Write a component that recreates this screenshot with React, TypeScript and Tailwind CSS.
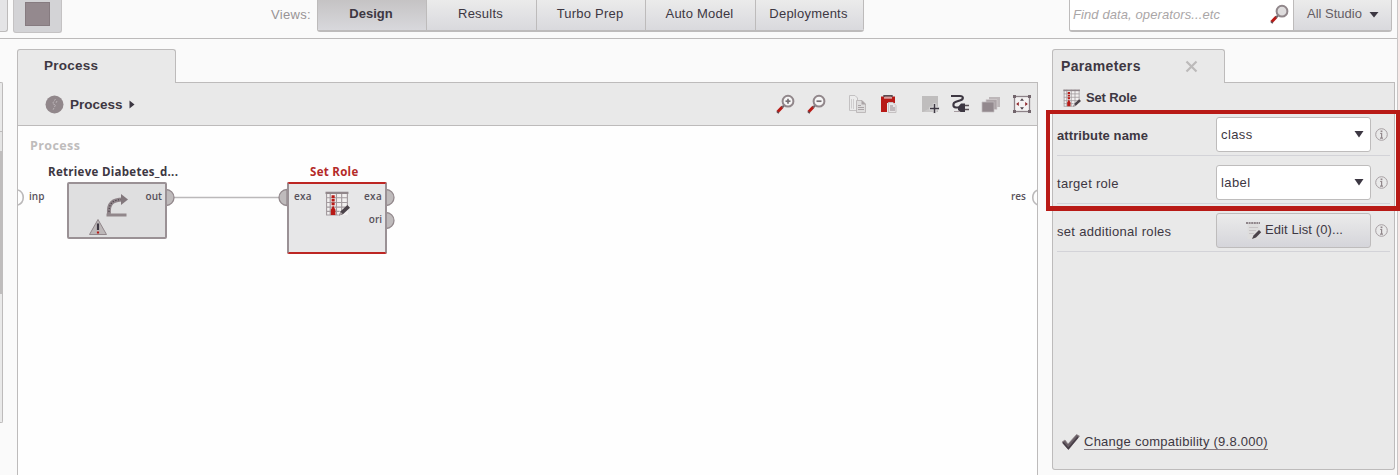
import React from "react";

const views = [
  { name: "Design", cls: "w-[109px]" },
  { name: "Results", cls: "w-[110px]" },
  { name: "Turbo Prep", cls: "w-[109px]" },
  { name: "Auto Model", cls: "w-[110px]" },
  { name: "Deployments", cls: "w-[108px]" },
];

function Magnifier({ sign, className }: { sign?: "+" | "-"; className?: string }) {
  return (
    <svg width="20" height="20" viewBox="0 0 20 20" className={className} fill="none">
      <path d="M1.5 18 L6.5 12.8" stroke="#b81a16" strokeWidth="3" />
      <path d="M.8 17.5 L2.8 19.2" stroke="#5d4a50" strokeWidth="1.5" />
      <path d="M6 13.5 L8.5 11" stroke="#6f6468" strokeWidth="2" />
      <circle cx="12" cy="7.2" r="5.4" fill={sign ? "#f5f5f5" : "#dedcdd"} stroke="#91878b" strokeWidth="2" />
      {sign && <path d="M9.5 7.2 H14.5" stroke="#777074" strokeWidth="1.7" />}
      {sign === "+" && <path d="M12 4.7 V9.7" stroke="#777074" strokeWidth="1.7" />}
    </svg>
  );
}

function CopyIcon() {
  return (
    <svg width="20" height="20" viewBox="0 0 20 20" fill="none">
      <path d="M2.5 1.5 H8 L10.5 4 V16.5 H2.5 Z" fill="#ececec" stroke="#c3c1c2" />
      <path d="M4.5 5 V14.5 M6.5 5 V15" stroke="#cfcdce" />
      <path d="M9.5 6.5 H15 L18.5 10 V18.5 H9.5 Z" fill="#dedddd" stroke="#bebabb" />
      <path d="M11 11.5 H14 M11 13.5 H17 M11 15.5 H17" stroke="#aaa4a6" />
      <path d="M14.5 6 L19 10.5 H14.5 Z" fill="#aaa4a6" />
    </svg>
  );
}

function PasteIcon() {
  return (
    <svg width="20" height="20" viewBox="0 0 20 20" fill="none">
      <path d="M2 2.5 H16 V9 H8 V18 H2 Z" fill="#b81a16" />
      <path d="M5 3.3 H13 V4.5 H5 Z" fill="#e5dcdc" />
      <path d="M5 3 V1.8 H13 V3" stroke="#574b51" strokeWidth="1.4" />
      <path d="M9.5 8.5 H14 L17 11.5 V18.5 H9.5 Z" fill="#e7e5e6" stroke="#c5c1c2" />
      <path d="M11 12 H14 M11 14 H16 M11 16 H16" stroke="#958b90" />
    </svg>
  );
}

function AddNoteIcon() {
  return (
    <svg width="20" height="20" viewBox="0 0 20 20" fill="none">
      <path d="M2 2 H18 V18 H2 Z" fill="#bfbdbd" />
      <path d="M3 18 L17 10 V18 Z" fill="#c9c7c7" />
      <path d="M14.5 9.5 V19.5 M9.5 14.5 H19.5" stroke="#dedede" strokeWidth="3.4" />
      <path d="M14.5 10 V19 M10 14.5 H19" stroke="#3d3742" strokeWidth="1.5" />
    </svg>
  );
}

function PlugIcon() {
  return (
    <svg width="20" height="20" viewBox="0 0 20 20" fill="none">
      <path d="M1 2 H10 C14 2 13.5 5.5 10.5 6.3 L6 7.8 C2.5 9 2.5 13 6 13.5 H9" stroke="#3d3742" strokeWidth="2.1" />
      <path d="M8 13 L11 9.5 H15 V18 H10.5 L8 16 Z" fill="#3d3742" />
      <path d="M15 11.5 H19 M15 15.5 H19" stroke="#5c5359" strokeWidth="1.5" />
      <path d="M4 17.5 H10" stroke="#a69ba0" />
    </svg>
  );
}

function StackIcon() {
  return (
    <svg width="20" height="20" viewBox="0 0 20 20">
      <path d="M8 3 H19 V13 H8 Z" fill="#bdb7b9" />
      <path d="M5 5.5 H16 V15.5 H5 Z" fill="#aca4a7" stroke="#d4cfd1" strokeWidth=".7" />
      <path d="M1 8 H13 V18 H1 Z" fill="#93898e" stroke="#c4bec1" strokeWidth=".7" />
    </svg>
  );
}

function FitIcon() {
  return (
    <svg width="20" height="20" viewBox="0 0 20 20" fill="none">
      <rect x="2.5" y="2.5" width="15" height="15" fill="#f4f2f2" stroke="#8d8288" strokeWidth="1.3" />
      <path d="M8 6.8 L10 4.2 L12 6.8 Z M8 13.2 L10 15.8 L12 13.2 Z" fill="#4e434b" />
      <path d="M6.8 8 L4.2 10 L6.8 12 Z M13.2 8 L15.8 10 L13.2 12 Z" fill="#8f2226" />
      <path d="M1 1 H4 V4 H1 Z M16 1 H19 V4 H16 Z M1 16 H4 V19 H1 Z M16 16 H19 V19 H16 Z" fill="#72656c" />
    </svg>
  );
}

function RoleIcon({ className }: { className?: string }) {
  return (
    <svg viewBox="0 0 24 24" className={className} fill="none">
      <rect x="1" y="1" width="21" height="22" fill="#f2f0f0" />
      <path d="M1.5 1 V23 M5 1 V23 M11 1 V23 M16 1 V23 M21.5 1 V15 M1 6.5 H22 M1 11 H22 M1 15.5 H20 M1 19.5 H14 M1 23 H13" stroke="#a39b9f" strokeWidth="1.1" />
      <path d="M0.5 1.8 H22.5" stroke="#91878b" strokeWidth="2.2" />
      <path d="M7.8 4 V14" stroke="#b81a16" strokeWidth="3" strokeDasharray="2.6 .9" />
      <path d="M7.8 14 L10 18 V23 H5.6 V18 Z" fill="#b81a16" />
      <path d="M13.5 23.5 L15 19.5 L21.5 13.5 L24 16 L17.5 22 Z" fill="#4b434a" />
      <path d="M13 24 L15 19.8 L17 22 Z" fill="#aaa0a4" />
    </svg>
  );
}

function ListIcon() {
  return (
    <svg width="17" height="19" viewBox="0 0 17 19" fill="none" className="shrink-0">
      <rect x="1.5" y="2" width="12" height="16" fill="#dedddd" />
      <path d="M0 2 H14" stroke="#8f858a" strokeWidth="2" strokeDasharray="2 .6" />
      <path d="M3 6.5 H12 M3 9.5 H10 M3 12.5 H8" stroke="#c8c4c6" />
      <path d="M6 18 L7.5 14.5 L13 9 L15.2 11.2 L10 16.5 Z" fill="#4b434a" />
    </svg>
  );
}

function InfoIcon() {
  return (
    <svg width="13" height="13" viewBox="0 0 13 13" fill="none" className="shrink-0">
      <circle cx="6.5" cy="6.5" r="5.8" stroke="#a69fa2" />
      <path d="M6.5 2.5 V4.2" stroke="#91878b" strokeWidth="1.8" />
      <path d="M5.2 5.5 H6.6 V10 M5 10.2 H8" stroke="#91878b" strokeWidth="1.2" />
    </svg>
  );
}

function Select({ value }: { value: string }) {
  return (
    <div className="flex h-[35px] w-[155px] shrink-0 items-center justify-between rounded-[3px] border border-[#bebcbc] bg-white pr-[6px] pl-[4px] text-[13px] tracking-[0.4px]">
      <span className="pt-[2px]">{value}</span>
      <svg width="10" height="8" viewBox="0 0 10 8" className="mb-px">
        <path d="M.5 1 H9.5 L5 7.5 Z" fill="#3c3742" />
      </svg>
    </div>
  );
}

function Row({ label, bold, children }: { label: string; bold?: boolean; children: React.ReactNode }) {
  return (
    <div className="flex h-[48px] items-center border-b border-[#d3d3d8] pt-[5px]">
      <div className={bold ? "w-[159px] pt-[3px] text-[13px] font-bold tracking-[0.1px]" : "w-[159px] pt-[3px] text-[13px] tracking-[0.3px]"}>{label}</div>
      {children}
      <div className="ml-[4px]">
        <InfoIcon />
      </div>
    </div>
  );
}

function Canvas() {
  return (
    <div className="relative flex-1 overflow-hidden bg-[#fefefe] font-['Open_Sans','Noto_Sans',sans-serif] text-[10px] leading-[14px] font-semibold text-[#57515a]">
      <div className="absolute top-[11px] left-[12px] text-[12.5px] leading-[17px] font-bold tracking-[0.4px] text-[#bebcbc]">Process</div>
      <svg className="absolute inset-0" width="1020" height="200" fill="none">
        <path d="M0 64 A8 8 0 0 1 0 79" stroke="#bbb9ba" strokeWidth="1.6" />
        <path d="M1020 64 A8 8 0 0 0 1020 79" stroke="#bbb9ba" strokeWidth="1.6" />
        <path d="M156 71.5 H262" stroke="#bbb9ba" strokeWidth="1.6" />
        <path d="M148 63.5 A8 8 0 0 1 148 79.5 Z" fill="#bfbbbc" stroke="#93898d" strokeWidth="1.3" />
        <path d="M269 63.5 A8 8 0 0 0 269 79.5 Z" fill="#bfbbbc" stroke="#93898d" strokeWidth="1.3" />
        <path d="M368 63.5 A8 8 0 0 1 368 79.5 Z" fill="#bfbbbc" stroke="#93898d" strokeWidth="1.3" />
        <path d="M368 86.5 A8 8 0 0 1 368 102.5 Z" fill="#bfbbbc" stroke="#93898d" strokeWidth="1.3" />
      </svg>
      <div className="absolute top-[63px] left-[11px]">inp</div>
      <div className="absolute top-[63px] left-[993px]">res</div>

      <div className="absolute top-[38px] left-[30px] text-[11.5px] leading-[15px] font-bold tracking-[0.3px] whitespace-nowrap text-[#3d3742]">Retrieve Diabetes_d...</div>
      <div className="absolute top-[56px] left-[49px] h-[57px] w-[100px] rounded-[2px] border-2 border-[#9a9195] bg-[#dfdfe0]">
        <div className="absolute top-[5px] right-[3px]">out</div>
        <svg width="98" height="54" viewBox="0 0 98 54" fill="none" className="absolute -top-px -left-px">
          <path d="M41 31 C40 20 45 16.5 55 16.5" stroke="#8e8388" strokeWidth="4" />
          <path d="M41 29 C41 20 45 16.5 55 16.5" stroke="#4e454c" strokeWidth="1.2" strokeDasharray="1.2 1.6" />
          <path d="M53 11 L60 16.5 L53 22 Z" fill="#82777c" />
          <path d="M38.5 32 H58.5" stroke="#91878b" strokeWidth="3" />
          <path d="M30 36.5 L38.5 51.5 H21.5 Z" fill="#bcb7b8" stroke="#91878b" strokeLinejoin="round" />
          <path d="M30 40.5 V47" stroke="#3d3742" strokeWidth="2.2" />
          <path d="M30 48.5 V50.5" stroke="#b81a16" strokeWidth="2.2" />
        </svg>
      </div>

      <div className="absolute top-[38px] left-[292px] text-[11.5px] leading-[15px] font-bold tracking-[0.3px] whitespace-nowrap text-[#b42a28]">Set Role</div>
      <div className="absolute top-[56px] left-[269px] h-[72px] w-[100px] rounded-[2px] border-2 border-x-[#9a9195] border-y-[#bd2623] bg-[#e7e7e8]">
        <div className="absolute top-[5px] left-[5px] tracking-[0.3px]">exa</div>
        <div className="absolute top-[5px] right-[3px] tracking-[0.3px]">exa</div>
        <div className="absolute top-[28px] right-[3px]">ori</div>
        <RoleIcon className="absolute top-[7px] left-[36px] h-[25px] w-[25px]" />
      </div>
    </div>
  );
}

export default function App() {
  return (
    <div className="flex h-[475px] w-[1400px] overflow-hidden bg-[#fafafa] font-['Liberation_Sans',Arial,sans-serif] text-[#3d3742]">
      <div className="flex min-w-0 flex-1 flex-col">
        <header className="flex h-[39px] shrink-0 items-start border-b border-[#bcbaba]">
          <div className="h-[32px] w-[8px] rounded-br-[3px] border-r border-b border-[#bdbbbb] bg-[#e4e4e6]" />
          <div className="ml-[5px] flex h-[33px] w-[49px] justify-center rounded-b-[3px] border-x border-b border-[#c4c2c3] bg-[#d3d3d6] pt-[2px]">
            <div className="h-[24px] w-[25px] border border-[#867b80] bg-[#94898e]" />
          </div>
          <div className="ml-[209px] w-[46px] pt-[7px] text-[13px] leading-[15px] tracking-[0.3px] text-[#989395]">Views:</div>
          <nav className="flex h-[32px] overflow-hidden rounded-b-[3px] border-b-2 border-l border-[#bdbbbb]">
            {views.map((v, i) => (
              <div
                key={v.name}
                className={
                  "flex items-center justify-center border-r border-[#bdbbbb] pr-[2px] pb-[2px] text-[13px] " +
                  (i === 0 ? "bg-linear-to-b from-[#c5c3c4] to-[#d8d8dc] font-bold " : "bg-linear-to-b from-[#ebebeb] to-[#d9d9dd] tracking-[0.22px] ") +
                  v.cls
                }
              >
                {v.name}
              </div>
            ))}
          </nav>
          <div className="ml-auto flex h-[32px] w-[323px] overflow-hidden rounded-b-[3px] border-x border-b-2 border-[#bdbbbb]">
            <div className="flex flex-1 items-center justify-between border-r border-[#bdbbbb] bg-white pl-[3px]">
              <span className="text-[13px] tracking-[0.1px] text-[#aaa6a7] italic">Find data, operators...etc</span>
              <Magnifier className="mr-[3px] mb-[2px]" />
            </div>
            <div className="flex w-[97px] items-center justify-between bg-linear-to-b from-[#ebebeb] to-[#d9d9dd] pr-[12px] pb-[2px] pl-[13px] text-[13px] text-[#655d64]">
              <span>All Studio</span>
              <svg width="10" height="7" viewBox="0 0 10 7">
                <path d="M.5 1 H9.5 L5 6.5 Z" fill="#3c3742" />
              </svg>
            </div>
          </div>
          <div className="w-[5px]" />
        </header>

        <div className="flex min-h-0 flex-1">
          <aside className="flex w-[17px] flex-col pt-[43px]">
            <div className="h-[49px] w-[3px] rounded-tr-[2px] border-t border-r border-[#bdbbbb] bg-[#e9e9e9]" />
            <div className="h-[20px] w-[3px] border-t border-r border-[#bdbbbb] bg-[#e4e4e4]" />
            <div className="h-[143px] w-[3px] bg-[#bfbdbd]" />
            <div className="h-[129px] w-[3px] rounded-br-[2px] border-r border-b border-[#bdbbbb] bg-[#e9e9e9]" />
          </aside>

          <section className="flex w-[1021px] flex-col pt-[10px]">
            <div className="flex h-[34px] shrink-0">
              <div className="flex w-[159px] items-center rounded-t-[3px] border-t border-r border-l border-[#bdbbbb] bg-[#e9e9e9] pl-[26px] text-[13.5px] font-bold tracking-[0.25px]">Process</div>
              <div className="flex-1 border-b border-[#bdbbbb]" />
            </div>
            <div className="flex h-[43px] shrink-0 items-center border-r border-b border-l border-[#bdbbbb] bg-[#e9e9e9] pr-[5px] pl-[27px]">
              <svg width="19" height="19" viewBox="0 0 19 19" fill="none">
                <circle cx="9.5" cy="9.5" r="9" fill="#91878b" />
                <path d="M10.5 4 L7.5 8.5 L10.5 10 L8 15 M12 6 L11 8" stroke="#b9b2b5" strokeDasharray="2 1" />
              </svg>
              <span className="ml-[6px] pt-[2px] text-[13.5px] font-bold">Process</span>
              <svg width="6" height="9" viewBox="0 0 6 9" className="mt-px ml-[6px]">
                <path d="M.5 .5 L5.5 4.5 L.5 8.5 Z" fill="#3c3742" />
              </svg>
              <div className="ml-auto flex items-center">
                <Magnifier sign="+" />
                <Magnifier sign="-" className="ml-[11px]" />
                <div className="ml-[20px]"><CopyIcon /></div>
                <div className="ml-[12px]"><PasteIcon /></div>
                <div className="ml-[21px]"><AddNoteIcon /></div>
                <div className="ml-[10px]"><PlugIcon /></div>
                <div className="ml-[11px]"><StackIcon /></div>
                <div className="ml-[11px]"><FitIcon /></div>
              </div>
            </div>
            <div className="flex min-h-0 flex-1 border-x border-[#bdbbbb]">
              <Canvas />
            </div>
          </section>

          <section className="relative ml-[14px] flex w-[343px] flex-col pt-[10px] pb-[5px]">
            <div className="flex h-[34px] shrink-0">
              <div className="flex w-[173px] items-center rounded-t-[3px] border-t border-r border-l border-[#bdbbbb] bg-[#e9e9e9] pr-[26px] pl-[8px]">
                <span className="text-[14px] font-bold tracking-[0.35px]">Parameters</span>
                <svg width="13" height="13" viewBox="0 0 13 13" className="ml-auto" fill="none">
                  <path d="M1.5 1.5 L11.5 11.5 M11.5 1.5 L1.5 11.5" stroke="#bcbaba" strokeWidth="2.2" />
                </svg>
              </div>
              <div className="flex-1 border-b border-[#bdbbbb]" />
            </div>
            <div className="flex flex-1 flex-col rounded-b-[3px] border-x border-b border-[#bdbbbb] bg-[#e9e9e9] px-[4px]">
              <div className="flex h-[25px] shrink-0 items-center pt-[5px] pl-[6px]">
                <RoleIcon className="h-[18px] w-[18px]" />
                <span className="ml-[5px] text-[13px] font-bold tracking-[-0.15px]">Set Role</span>
              </div>
              <Row label="attribute name" bold>
                <Select value="class" />
              </Row>
              <Row label="target role">
                <Select value="label" />
              </Row>
              <Row label="set additional roles">
                <div className="flex h-[35px] w-[155px] shrink-0 items-center justify-center rounded-[3px] border border-[#bebcbc] bg-linear-to-b from-[#ebebeb] to-[#d5d5da] pl-[2px] text-[13px] tracking-[0.1px]">
                  <ListIcon />
                  <span className="ml-[2px]">Edit List (0)...</span>
                </div>
              </Row>
              <div className="mt-auto mb-[18px] flex items-center pl-[4px]">
                <svg width="19" height="18" viewBox="0 0 19 18" fill="none">
                  <path d="M1 9 L4 7 L7 11 L15.5 1.5 L18.5 3 L7.5 16.5 Z" fill="#6a6067" stroke="#91878b" strokeWidth=".7" />
                  <path d="M2 9.5 L7.3 15.5 L17 4" stroke="#473e47" strokeWidth="1.6" />
                </svg>
                <span className="ml-[4px] border-b border-[#82767c] text-[13px] leading-[14px] tracking-[0.25px]">Change compatibility (9.8.000)</span>
              </div>
            </div>
            <div className="pointer-events-none absolute top-[71px] left-[-6px] h-[101px] w-[354px] border-[4px] border-b-[5px] border-[#b81a16]" />
          </section>
        </div>
      </div>
      <div className="w-[3px] shrink-0 border-l border-[#c9c6c6] bg-[#f8e9e8]" />
    </div>
  );
}
